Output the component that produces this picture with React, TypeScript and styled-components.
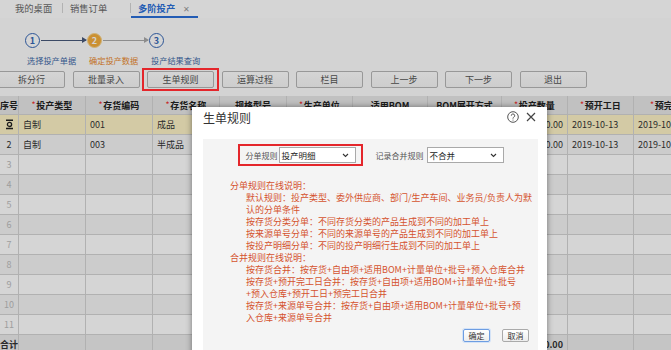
import React from "react";
import styled, { createGlobalStyle, css } from "styled-components";

const GlobalStyle = createGlobalStyle`
  *, *::before, *::after { box-sizing: border-box; }
  html, body { margin: 0; padding: 0; }
  body {
    font-family: "Noto Sans CJK SC", "Liberation Sans", sans-serif;
    background: #fff;
  }
`;

const columns = [
  { title: "序号", w: 19, align: "center" },
  { title: "投产类型", w: 67, req: true },
  { title: "存货编码", w: 67, req: true },
  { title: "存货名称", w: 67, req: true },
  { title: "规格型号", w: 67 },
  { title: "生产单位", w: 66, req: true },
  { title: "适用BOM", w: 75 },
  { title: "BOM展开方式", w: 74 },
  { title: "投产数量", w: 66, req: true, align: "right" },
  { title: "预开工日", w: 66, req: true },
  { title: "预完工日", w: 74, req: true },
];
const colTemplate = columns.map((c) => `${c.w}px`).join(" ");

const rows = [
  ["自制", "001", "成品", "", "", "", "", "10.00", "2019-10-13", "2019-10-13"],
  ["自制", "003", "半成品", "", "", "", "", "20.00", "2019-10-13", "2019-10-13"],
];

const notes = [
  { head: true, text: "分单规则在线说明：" },
  { text: "默认规则：投产类型、委外供应商、部门/生产车间、业务员/负责人为默" },
  { text: "认的分单条件" },
  { text: "按存货分类分单：不同存货分类的产品生成到不同的加工单上" },
  { text: "按来源单号分单：不同的来源单号的产品生成到不同的加工单上" },
  { text: "按投产明细分单：不同的投产明细行生成到不同的加工单上" },
  { head: true, text: "合并规则在线说明：" },
  { text: "按存货合并：按存货+自由项+适用BOM+计量单位+批号+预入仓库合并" },
  { text: "按存货+预开完工日合并：按存货+自由项+适用BOM+计量单位+批号" },
  { text: "+预入仓库+预开工日+预完工日合并" },
  { text: "按存货+来源单号合并：按存货+自由项+适用BOM+计量单位+批号+预" },
  { text: "入仓库+来源单号合并" },
];

const App: React.FC = () => {
  return (
    <>
      <GlobalStyle />
      <Page>
        <TabBar>
          <Tab $first>我的桌面</Tab>
          <TabSep />
          <Tab>销售订单</Tab>
          <TabSep />
          <Tab $active>
            多阶投产
            <TabClose>✕</TabClose>
          </Tab>
        </TabBar>

        <Steps>
          <Step>
            <StepTrack>
              <StepDot>1</StepDot>
              <Connector $done />
            </StepTrack>
            <StepLabel>选择投产单据</StepLabel>
          </Step>
          <Step>
            <StepTrack>
              <StepDot $current>2</StepDot>
              <Connector />
            </StepTrack>
            <StepLabel $current>确定投产数据</StepLabel>
          </Step>
          <Step>
            <StepTrack>
              <StepDot>3</StepDot>
            </StepTrack>
            <StepLabel>投产结果查询</StepLabel>
          </Step>
        </Steps>

        <Toolbar>
          <ToolButton>拆分行</ToolButton>
          <ToolButton>批量录入</ToolButton>
          <ToolButton $marked>生单规则</ToolButton>
          <ToolButton>运算过程</ToolButton>
          <ToolButton>栏目</ToolButton>
          <ToolButton>上一步</ToolButton>
          <ToolButton>下一步</ToolButton>
          <ToolButton>退出</ToolButton>
        </Toolbar>

        <Grid>
          <Row $kind="header">
            {columns.map((c) => (
              <Cell key={c.title} $align="center" $bold>
                {c.req && <Req>*</Req>}
                {c.title}
              </Cell>
            ))}
          </Row>
          {Array.from({ length: 11 }).map((_, i) => {
            const data = rows[i];
            return (
              <Row key={i} $kind={i === 0 ? "selected" : i % 2 ? "even" : "odd"}>
                <Cell $align="center" $muted={!data}>
                  {i === 0 ? <CurrentMark /> : i + 1}
                </Cell>
                {columns.slice(1).map((c, j) => (
                  <Cell key={c.title} $align={c.align === "right" ? "right" : "left"}>
                    {data ? data[j] : ""}
                  </Cell>
                ))}
              </Row>
            );
          })}
          <Row $kind="footer">
            {columns.map((c, j) => (
              <Cell key={c.title} $align={j === 0 ? "left" : c.align === "right" ? "right" : "left"} $bold $flush={j === 0}>
                {j === 0 ? "合计" : c.title === "投产数量" ? "30.00" : ""}
              </Cell>
            ))}
          </Row>
        </Grid>

        <Mask />

        <Dialog>
          <TitleBar>
            <DialogTitle>生单规则</DialogTitle>
            <TitleIcons>
              <svg width="12" height="12" viewBox="0 0 12 12">
                <circle cx="6" cy="6" r="5.3" fill="none" stroke="#555" strokeWidth="1" />
                <path d="M4.3 4.7a1.7 1.7 0 1 1 2.4 1.5c-.5.3-.7.6-.7 1.1v.4" fill="none" stroke="#555" strokeWidth="1" />
                <circle cx="6" cy="9" r=".6" fill="#555" />
              </svg>
              <svg width="10" height="10" viewBox="0 0 10 10">
                <path d="M1 1l8 8M9 1L1 9" stroke="#444" strokeWidth="1.2" />
              </svg>
            </TitleIcons>
          </TitleBar>

          <Panel>
            <ControlsRow>
              <MarkedField>
                <FieldLabel>分单规则</FieldLabel>
                <FakeSelect>
                  投产明细
                  <Chevron />
                </FakeSelect>
              </MarkedField>
              <Field>
                <FieldLabel>记录合并规则</FieldLabel>
                <FakeSelect>
                  不合并
                  <Chevron />
                </FakeSelect>
              </Field>
            </ControlsRow>

            <Notes>
              {notes.map((n, i) => (
                <NoteLine key={i} $head={n.head}>
                  {n.text}
                </NoteLine>
              ))}
            </Notes>

            <ButtonRow>
              <DialogButton $primary>确定</DialogButton>
              <DialogButton>取消</DialogButton>
            </ButtonRow>
          </Panel>
        </Dialog>
      </Page>
    </>
  );
};

const CurrentMark: React.FC = () => (
  <svg width="9" height="11" viewBox="0 0 9 11">
    <path d="M1 1.2h7M1 9.6h7" stroke="#222" strokeWidth="1.5" />
    <circle cx="4.5" cy="5.4" r="2.1" fill="none" stroke="#222" strokeWidth="1.3" />
  </svg>
);

const Chevron: React.FC = () => (
  <svg width="7" height="5" viewBox="0 0 7 5">
    <path d="M1 1l2.5 2.5L6 1" fill="none" stroke="#333" strokeWidth="1.1" />
  </svg>
);

// 页面
const Page = styled.div`
  position: relative;
  width: 671px;
  height: 350px;
  overflow: hidden;
  background: #fdfdfd;
  color: #333;
`;

const TabBar = styled.div`
  display: flex;
  align-items: stretch;
  height: 18px;
  background: #fff;
`;

const Tab = styled.div<{ $first?: boolean; $active?: boolean }>`
  display: flex;
  align-items: center;
  gap: 8px;
  width: ${(p) => (p.$first ? 62 : 67)}px;
  padding-left: ${(p) => (p.$first ? 15 : 7)}px;
  font-size: 9.3px;
  white-space: nowrap;
  color: ${(p) => (p.$active ? "#2a6fd8" : "#6a6a6a")};
  font-weight: ${(p) => (p.$active ? 600 : 400)};
  border-bottom: 2px solid ${(p) => (p.$active ? "#2a6fd8" : "transparent")};
`;

const TabClose = styled.span`
  font-size: 8px;
  font-weight: 400;
  color: #999;
`;

const TabSep = styled.div`
  width: 1px;
  height: 10px;
  align-self: center;
  margin-bottom: 2px;
  background: #d6d6d6;
`;

// 步骤
const Steps = styled.div`
  display: flex;
  height: 50px;
  padding: 15px 0 0 25px;
`;

const Step = styled.div`
  display: flex;
  flex-direction: column;
`;

const StepTrack = styled.div`
  display: flex;
  align-items: center;
`;

const StepDot = styled.div<{ $current?: boolean }>`
  width: 15px;
  height: 15px;
  border-radius: 50%;
  display: flex;
  align-items: center;
  justify-content: center;
  font-size: 9px;
  font-weight: 700;
  ${(p) =>
    p.$current
      ? css`
          background: #f4ad3c;
          border: 1.5px solid #f8d48c;
          color: #fff;
        `
      : css`
          background: #fff;
          border: 1.5px solid #3566b4;
          color: #3566b4;
        `}
`;

const Connector = styled.div<{ $done?: boolean }>`
  position: relative;
  width: 45px;
  height: 1px;
  margin: 0 1px;
  background: ${(p) => (p.$done ? "#48597a" : "#a9a9a9")};
  &::after {
    content: "";
    position: absolute;
    right: -1px;
    top: -3px;
    border-left: 5px solid ${(p) => (p.$done ? "#48597a" : "#a9a9a9")};
    border-top: 3.5px solid transparent;
    border-bottom: 3.5px solid transparent;
  }
`;

const StepLabel = styled.div<{ $current?: boolean }>`
  margin: 6px 0 0 2px;
  font-size: 8.2px;
  line-height: 12px;
  white-space: nowrap;
  color: ${(p) => (p.$current ? "#ea8a2e" : "#3d6aa8")};
`;

// 工具栏
const Toolbar = styled.div`
  display: flex;
  gap: 7.5px;
  height: 28px;
  padding-top: 3px;
  margin-left: -2px;
`;

const ToolButton = styled.button<{ $marked?: boolean }>`
  position: relative;
  flex: none;
  width: 67px;
  height: 17px;
  padding: 0;
  border: 1px solid #b6b6b6;
  border-radius: 2px;
  background: linear-gradient(#ffffff, #f6f6f6);
  font-family: "Noto Sans CJK SC", sans-serif;
  font-size: 9px;
  color: #555;
  ${(p) =>
    p.$marked &&
    css`
      &::after {
        content: "";
        position: absolute;
        top: -4px;
        bottom: -4px;
        left: -6px;
        right: -6px;
        border: 2px solid #e4262b;
        z-index: 30;
      }
    `}
`;

// 表格
const Grid = styled.div`
  display: flex;
  flex-direction: column;
`;

const rowBg = {
  header: "#e8e8e8",
  selected: "#fdf2c6",
  odd: "#ffffff",
  even: "#f5f5f5",
  footer: "#ececec",
};

const Row = styled.div<{ $kind: keyof typeof rowBg }>`
  display: grid;
  grid-template-columns: ${colTemplate};
  height: ${(p) => (p.$kind === "header" ? 19 : 20)}px;
  background: ${(p) => rowBg[p.$kind]};
  font-size: 9px;
  color: ${(p) => (p.$kind === "header" ? "#222" : "#333")};
`;

const Cell = styled.div<{ $align?: string; $bold?: boolean; $muted?: boolean; $flush?: boolean }>`
  display: flex;
  align-items: center;
  justify-content: ${(p) => (p.$align === "center" ? "center" : p.$align === "right" ? "flex-end" : "flex-start")};
  padding: ${(p) => (p.$flush ? "0" : "0 4px")};
  border-right: 1px solid #d4d4d4;
  border-bottom: 1px solid #d4d4d4;
  overflow: hidden;
  white-space: nowrap;
  font-weight: ${(p) => (p.$bold ? 700 : 400)};
  color: ${(p) => (p.$muted ? "#bdbdbd" : "inherit")};
`;

const Req = styled.span`
  color: #e33;
  font-size: 7px;
  margin-right: 1px;
  align-self: flex-start;
  margin-top: 3px;
`;

// 弹窗
const Mask = styled.div`
  position: absolute;
  inset: 0;
  background: rgba(0, 0, 0, 0.165);
  z-index: 10;
`;

const Dialog = styled.div`
  position: absolute;
  left: 192px;
  top: 107px;
  width: 355px;
  height: 260px;
  display: flex;
  flex-direction: column;
  background: #fff;
  box-shadow: 0 0 6px rgba(0, 0, 0, 0.45);
  z-index: 20;
`;

const TitleBar = styled.div`
  display: flex;
  align-items: center;
  justify-content: space-between;
  height: 18px;
  margin-top: 1px;
  padding: 0 11px 0 11px;
`;

const DialogTitle = styled.div`
  font-size: 12px;
  color: #333;
`;

const TitleIcons = styled.div`
  display: flex;
  align-items: center;
  gap: 7px;
`;

const Panel = styled.div`
  flex: 1;
  margin: 13px 9px 0 11px;
  padding-top: 5px;
  background: #f4f4f4;
`;

const ControlsRow = styled.div`
  display: flex;
  align-items: center;
  justify-content: center;
  gap: 13px;
`;

const Field = styled.div`
  display: flex;
  align-items: center;
  gap: 3px;
`;

const MarkedField = styled(Field)`
  position: relative;
  z-index: 30;
  gap: 1px;
  height: 22px;
  padding: 0 5px 0 6px;
  border: 2px solid #e4262b;
`;

const FieldLabel = styled.span`
  font-size: 8px;
  color: #555;
  white-space: nowrap;
`;

const FakeSelect = styled.div`
  display: flex;
  align-items: center;
  justify-content: space-between;
  width: 77px;
  height: 16px;
  padding: 0 6px 0 2px;
  border: 1px solid #a9a9a9;
  background: #fff;
  font-size: 8.5px;
  color: #222;
`;

const Notes = styled.div`
  margin-top: 14px;
  padding-left: 27px;
  color: #d4532e;
  font-size: 9px;
  line-height: 12px;
`;

const NoteLine = styled.div<{ $head?: boolean }>`
  padding-left: ${(p) => (p.$head ? 0 : 16)}px;
  white-space: nowrap;
`;

const ButtonRow = styled.div`
  display: flex;
  justify-content: flex-end;
  gap: 12px;
  margin-top: 5px;
  padding-right: 9px;
`;

const DialogButton = styled.button<{ $primary?: boolean }>`
  width: 27px;
  height: 13px;
  padding: 0;
  border-radius: 2px;
  font-family: "Noto Sans CJK SC", sans-serif;
  font-size: 8px;
  line-height: 11px;
  color: #333;
  background: linear-gradient(#ffffff, #ededed);
  border: 1px solid ${(p) => (p.$primary ? "#6d9de2" : "#aaa")};
  ${(p) =>
    p.$primary &&
    css`
      box-shadow: 0 0 0 1px #d4e3f7;
    `}
`;

export default App;
